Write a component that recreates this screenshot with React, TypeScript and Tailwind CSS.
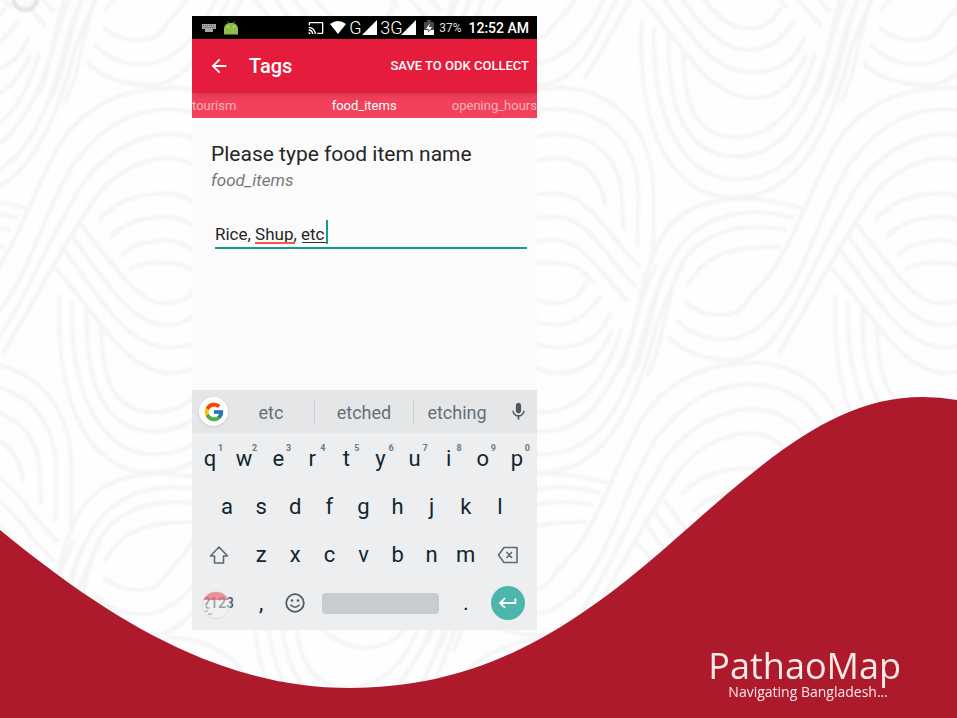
import type { ReactNode } from "react";
import { MdArrowBack, MdCast, MdKeyboardReturn, MdMic } from "react-icons/md";
import { FcGoogle } from "react-icons/fc";

const motif = [
  // deep bowl with its right arm rising into the stream
  "M305 60C290 380 390 600 590 592C760 590 860 430 930 160C950 90 980 30 1010 -30",
  "M342 80C335 360 430 538 590 538C740 538 830 420 895 170C915 90 935 30 965 -30",
  "M386 100C380 330 440 468 590 470C720 470 800 350 860 170C880 90 900 30 930 -30",
  "M430 150C430 320 470 412 590 412C700 410 780 320 825 160",
  // nested shallow bowls
  "M288 -25C420 120 500 292 640 295C720 290 760 250 800 165",
  "M310 -90C450 110 520 218 640 218C720 215 770 180 795 110",
  "M340 -120C480 80 540 150 630 150C690 150 730 110 765 60",
  "M370 -150C530 60 570 88 630 85C680 85 700 60 725 20",
  // wide arches and the stream below their left side
  "M1214 265C1060 265 960 330 895 420C790 600 760 760 640 880C600 930 600 945 540 945C490 945 460 930 435 905",
  "M1214 328C1080 330 1000 400 930 490C830 650 790 850 690 950C640 1000 600 1020 540 1018C480 1015 440 990 410 960",
  "M1214 402C1110 405 1010 470 950 560C850 730 780 900 720 990C670 1060 620 1085 560 1080C480 1075 420 1050 385 1010",
  "M1214 475C1120 475 1040 530 990 600C880 760 800 930 715 1060",
  "M50 262C200 265 330 360 340 560L340 760",
  "M50 328C190 330 290 420 295 580L292 740",
  "M50 402C160 405 240 470 245 590L250 690",
  "M50 475C130 475 190 540 195 620",
  // low arches
  "M50 580C160 590 210 720 300 800M1214 580C1110 580 1050 610 1005 660",
  "M50 650C150 655 200 780 290 860M1214 650C1130 650 1080 670 1040 710",
  "M50 720C130 725 190 830 265 905M1214 720C1150 720 1090 740 1070 770",
  "M50 790C100 790 130 810 160 850M1214 790C1160 785 1120 790 1095 810",
  // eye arches running down to the left
  "M790 625C560 560 420 610 360 720C290 850 290 1020 240 1110",
  "M765 655C570 600 450 680 400 770C330 890 330 1020 280 1120",
  "M740 690C580 660 470 710 420 800C370 920 370 1040 320 1130",
  "M725 740C590 740 500 750 440 860",
];

const cells = [-3, -2, -1, 0, 1, 2].flatMap((row) =>
  [-3, -2, -1, 0, 1, 2].map((col) => ({ x: 540 + col * 388 + (row % 2 ? 194 : 0), y: row * 275 })),
);

function Backdrop() {
  return (
    <svg aria-hidden="true" viewBox="0 0 957 718" preserveAspectRatio="none" className="absolute inset-0 h-full w-full">
      <defs>
        <g id="motif" fill="none" stroke="#f4f4f4" strokeWidth="12" transform="scale(.3333)">
          {motif.map((d) => <path key={d} d={d} />)}
        </g>
      </defs>
      <g className="blur-[1px]">
        {cells.map((c) => <use key={`${c.x},${c.y}`} href="#motif" x={c.x} y={c.y} />)}
        <circle cx="25" cy="-2" r="12" fill="#fafafa" stroke="#e2e2e2" strokeWidth="4" />
      </g>
      <path fill="#ad1a2c" d="M0 530C110 620 220 688 350 688C480 688 570 630 663 550C760 465 830 397 923 397Q940 397 957 400V718H0Z" />
    </svg>
  );
}

function Signal() {
  return <svg aria-hidden="true" viewBox="0 0 15 15" className="size-[15px]"><path fill="#fff" d="M15 0V15H0Z" /></svg>;
}

function StatusBar() {
  return (
    <div className="flex h-[23px] items-center bg-black pr-2 pl-[10px] text-white">
      <svg aria-label="Keyboard" viewBox="0 0 14 8" className="h-2 w-[14px]">
        <path fill="#a6a6a6" d="M0 0H14V5H11V8H3V5H0Z" />
        <path stroke="#444" strokeWidth=".8" strokeDasharray="1 1" d="M1 1.500H13M1.500 3.500H13" />
      </svg>
      <svg aria-label="Android" viewBox="0 0 14 14" className="ml-2 size-[14px]">
        <path d="M3.500 .5L5 3M10.500 .5L9 3" stroke="#8fbd45" strokeWidth=".9" />
        <path fill="#8fbd45" d="M0 13.500V8C0 4 3 2 7 2S14 4 14 8V13.500Z" />
        <path fill="#e8f3d5" d="M3.500 5h1.500v1.300H3.500zM9 5h1.500v1.300H9z" />
      </svg>
      <MdCast className="ml-auto size-4" />
      <svg aria-label="Wi-Fi" viewBox="0 0 16 13" className="ml-[6px] h-[13px] w-4"><path fill="#fff" d="M0 3Q8-3 16 3L8 13Z" /></svg>
      <span className="ml-[3px] w-[13px] text-lg leading-none font-light">G</span>
      <Signal />
      <span className="ml-[3px] w-[21px] text-lg leading-none font-light">3G</span>
      <Signal />
      <svg aria-label="Battery charging" viewBox="0 0 10 15" className="ml-2 h-[15px] w-[10px]">
        <path fill="#4a4a4a" d="M3 0h4v2h3v8H0V2h3z" /><path fill="#fff" d="M0 10h10v5H0zM6 3L2 9h3L4 13l4-6H5z" />
      </svg>
      <span className="ml-[5px] text-xs text-[#ddd]">37%</span>
      <span className="ml-[7px] text-sm font-medium">12:52 AM</span>
    </div>
  );
}

function Key({ label, hint }: { label: string; hint?: string }) {
  return (
    <button className="relative h-full flex-[2] text-[22px] leading-none text-[#12262f]">
      {label}
      {hint && <sup className="absolute top-2 right-1 text-[9px] leading-[10px] font-bold text-[#6e7b81]">{hint}</sup>}
    </button>
  );
}

function Row({ children, inset }: { children: ReactNode; inset?: boolean }) {
  return <div className={inset ? "flex h-12 items-center px-[17px]" : "flex h-12 items-center"}>{children}</div>;
}

function Keyboard() {
  return (
    <section aria-label="Keyboard" className="bg-[#eceef0]">
      <div className="flex h-[43px] items-center bg-[#e4e6e8] pr-2 pl-[7px] text-lg text-[#647077]">
        <button aria-label="Google" className="grid size-[29px] place-items-center rounded-full bg-white shadow">
          <FcGoogle className="size-[22px]" />
        </button>
        <button className="flex-[86] pt-[2px]">etc</button>
        <span className="h-6 w-px bg-[#cdd1d3]" />
        <button className="flex-[98] pt-[2px]">etched</button>
        <span className="h-6 w-px bg-[#cdd1d3]" />
        <button className="flex-[86] pt-[2px] pr-2">etching</button>
        <button aria-label="Voice input"><MdMic className="size-[21px] text-[#4b5a63]" /></button>
      </div>
      <div className="px-px pt-[2px] pr-[3px] pb-[3px]">
        <Row>{"qwertyuiop".split("").map((k, i) => <Key key={k} label={k} hint={String((i + 1) % 10)} />)}</Row>
        <Row inset>{"asdfghjkl".split("").map((k) => <Key key={k} label={k} />)}</Row>
        <Row>
          <button aria-label="Shift" className="grid h-full flex-[3] place-items-center">
            <svg viewBox="0 0 20 20" className="size-5"><path fill="none" stroke="#5d6b72" strokeWidth="1.600" strokeLinejoin="round" d="M10 2L1.500 11H5.500V18H14.500V11H18.500Z" /></svg>
          </button>
          {"zxcvbnm".split("").map((k) => <Key key={k} label={k} />)}
          <button aria-label="Backspace" className="grid h-full flex-[3] place-items-center">
            <svg viewBox="0 0 22 18" className="h-[18px] w-[22px]"><path fill="none" stroke="#5d6b72" strokeWidth="1.600" strokeLinejoin="round" d="M7 1.500H20V16.500H7L1.500 9ZM9.500 6L15 12M15 6L9.500 12" /></svg>
          </button>
        </Row>
        <Row>
          <button className="relative h-full flex-[3] text-sm font-medium text-[#4c5a61]">
            ?123
            <svg aria-hidden="true" viewBox="0 0 28 28" className="absolute top-3 left-[9px] size-7">
              <circle cx="14" cy="14" r="13.500" fill="#f6f6f6" fillOpacity=".45" stroke="#dfe1e2" />
              <path fill="#e84a60" fillOpacity=".6" d="M2 9Q5 1 14 1T26 9Z" />
              <path stroke="#999" d="M3 14h2M4 17h4M3 20h3M6 23h4" />
            </svg>
          </button>
          <Key label="," />
          <button aria-label="Emoji" className="grid h-full flex-[2] place-items-center">
            <svg viewBox="0 0 20 20" className="size-5">
              <circle cx="10" cy="10" r="8.800" fill="none" stroke="#4e5c64" strokeWidth="1.800" />
              <path fill="none" stroke="#4e5c64" strokeWidth="1.500" strokeLinecap="round" d="M5.800 12Q10 16.500 14.200 12" />
              <circle cx="7" cy="7.500" r="1.300" fill="#4e5c64" /><circle cx="13" cy="7.500" r="1.300" fill="#4e5c64" />
            </svg>
          </button>
          <div className="flex flex-[8]"><button aria-label="Space" className="mx-[10px] h-[21px] flex-1 rounded-sm bg-[#c9cccf]" /></div>
          <Key label="." />
          <div className="flex flex-[3] justify-center">
            <button aria-label="Enter" className="grid size-[34px] shrink-0 place-items-center rounded-full bg-[#4db6ac] text-white"><MdKeyboardReturn className="size-[22px]" /></button>
          </div>
        </Row>
      </div>
    </section>
  );
}

export default function App() {
  return (
    <div className="relative flex min-h-screen justify-between overflow-hidden bg-[#fefefe] pt-4 pr-14 pl-48 font-[Roboto,sans-serif]">
      <Backdrop />
      <main className="relative w-[345px] shrink-0 self-start overflow-hidden bg-[#fbfbfb]">
        <StatusBar />
        <header className="relative flex h-[54px] items-center bg-[#e51c3b] pr-2 pl-4 text-white shadow-md">
          <button aria-label="Back"><MdArrowBack className="size-[22px]" /></button>
          <h1 className="ml-[19px] text-xl font-medium">Tags</h1>
          <button className="ml-auto text-[13px] font-medium">SAVE TO ODK COLLECT</button>
        </header>
        <nav className="flex h-[25px] items-center justify-between bg-[#f3415b] text-[13px] text-white/60">
          <a href="#tourism">tourism</a>
          <a href="#food_items" className="ml-10 text-white">food_items</a>
          <a href="#opening_hours">opening_hours</a>
        </nav>
        <div className="h-[272px] pt-[22px] pr-[10px] pl-[19px]">
          <label htmlFor="food" className="block text-[21px] leading-7 text-[#262626]">Please type food item name</label>
          <p className="text-[17px] leading-6 text-[#777] italic">food_items</p>
          <div className="relative mt-7 ml-1">
            <input id="food" defaultValue="Rice, Shup, etc" spellCheck={false} className="block h-[29px] w-full border-b-2 border-[#179b8f] bg-transparent text-[17px] text-[#262626] outline-none" />
            <span className="absolute top-[22px] left-10 h-[2px] w-10 bg-[#ff5252]" />
            <span className="absolute top-[22px] left-[87px] h-px w-6 bg-[#333]" />
            <span className="absolute top-0 left-[111px] h-6 w-[2px] bg-[#179b8f]" />
          </div>
        </div>
        <Keyboard />
      </main>
      <div className="relative self-end pb-[18px] font-['Open_Sans',sans-serif] text-[#fbe9e9]">
        <p className="text-4xl leading-9">PathaoMap</p>
        <p className="pl-5 text-sm leading-4">Navigating Bangladesh...</p>
      </div>
    </div>
  );
}
